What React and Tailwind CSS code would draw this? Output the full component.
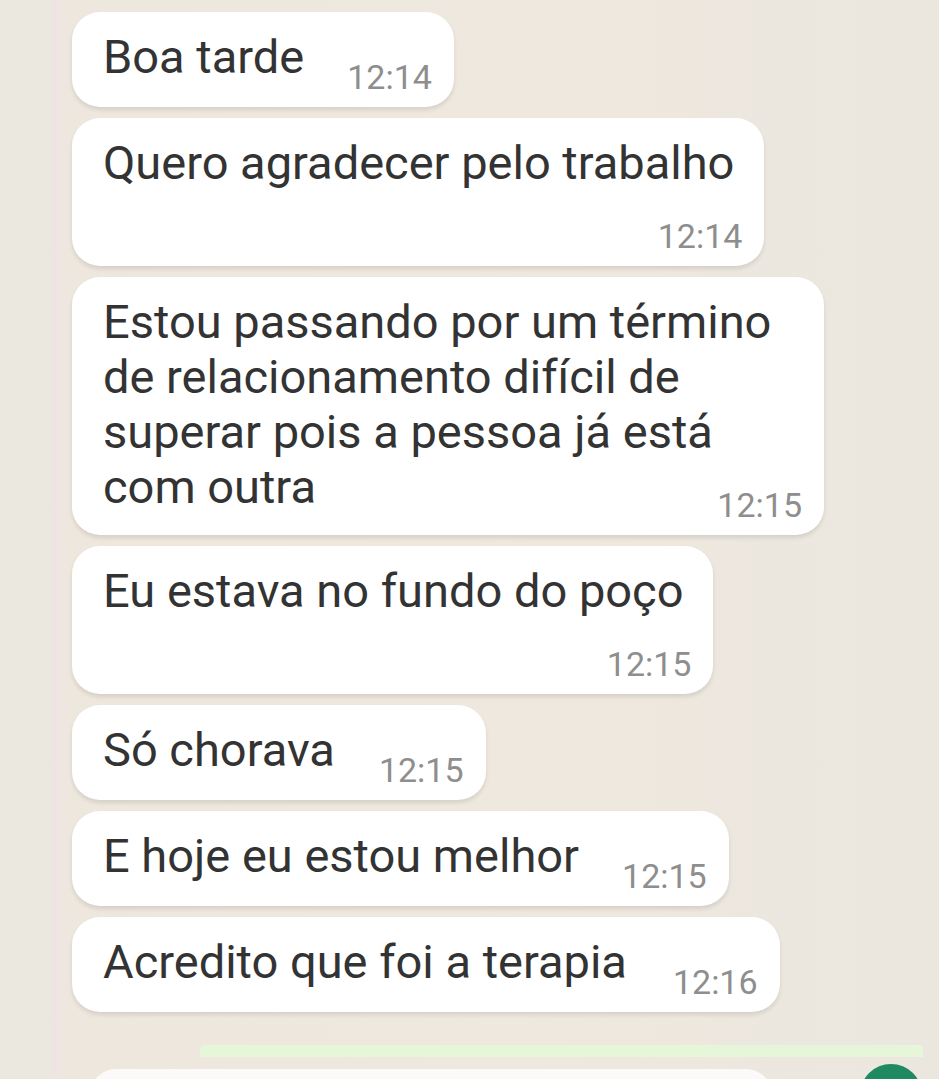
import React from "react";

const textCls = "text-[47px] leading-[55px] text-[#333333] whitespace-nowrap";
const timeCls = "text-[34px] leading-[33px] text-[#8e8e8e] whitespace-nowrap";
const bubbleCls =
  "self-start bg-white rounded-[28px] pl-[31px] pr-[22px] pt-[17px] pb-[13px] shadow-[0_3px_4px_rgba(0,0,0,0.10)]";

function Inline({ text, time, gap = "ml-[43px]" }) {
  return (
    <div className={bubbleCls + " flex items-end"}>
      <span className={textCls + " mb-[10px]"}>{text}</span>
      <span className={timeCls + " " + gap}>{time}</span>
    </div>
  );
}

function Stacked({ text, time }) {
  return (
    <div className={bubbleCls + " flex flex-col"}>
      <span className={textCls + " pr-[8px]"}>{text}</span>
      <div className="flex justify-end mt-[30px]">
        <span className={timeCls}>{time}</span>
      </div>
    </div>
  );
}

export default function App() {
  return (
    <div
      className="w-[939px] h-[1079px] overflow-hidden flex bg-[#eee7de]"
      style={{ fontFamily: "Roboto, 'Noto Sans', Arial, sans-serif" }}
    >
      <div className="w-[52px] shrink-0 bg-[#ebe8e0]" />
      <div className="w-[14px] shrink-0 bg-gradient-to-r from-[#efe4e2] to-[#f0e6e1]" />
      <div className="flex-1 flex flex-col pl-[6px] pt-[12px] bg-gradient-to-r from-[#eee7de] via-[#efe8de] to-[#ebe7df]">
        <div className="flex flex-col gap-[11px]">
          <Inline text="Boa tarde" time="12:14" />
          <Stacked text="Quero agradecer pelo trabalho" time="12:14" />
          <div className={bubbleCls + " w-[752px] flex flex-col"}>
            <span className={textCls}>Estou passando por um término</span>
            <span className={textCls}>de relacionamento difícil de</span>
            <span className={textCls}>superar pois a pessoa já está</span>
            <div className="flex items-end">
              <span className={textCls + " mb-[8px]"}>com outra</span>
              <span className={timeCls + " ml-auto"}>12:15</span>
            </div>
          </div>
          <Stacked text="Eu estava no fundo do poço" time="12:15" />
          <Inline text="Só chorava" time="12:15" gap="ml-[44px]" />
          <Inline text="E hoje eu estou melhor" time="12:15" />
          <Inline text="Acredito que foi a terapia" time="12:16" gap="ml-[46px]" />
        </div>
        <div className="mt-[33px] ml-[128px] w-[723px] h-[12px] shrink-0 bg-[#e5f6d9] rounded-t-[4px]" />
        <div className="flex items-start mt-[7px] shrink-0">
          <div className="ml-[18px] mt-[5px] w-[682px] h-[40px] bg-[#fbfaf8] rounded-t-[26px]" />
          <div className="ml-[88px] w-[62px] h-[62px] rounded-full bg-[#1f8961]" />
        </div>
      </div>
    </div>
  );
}
